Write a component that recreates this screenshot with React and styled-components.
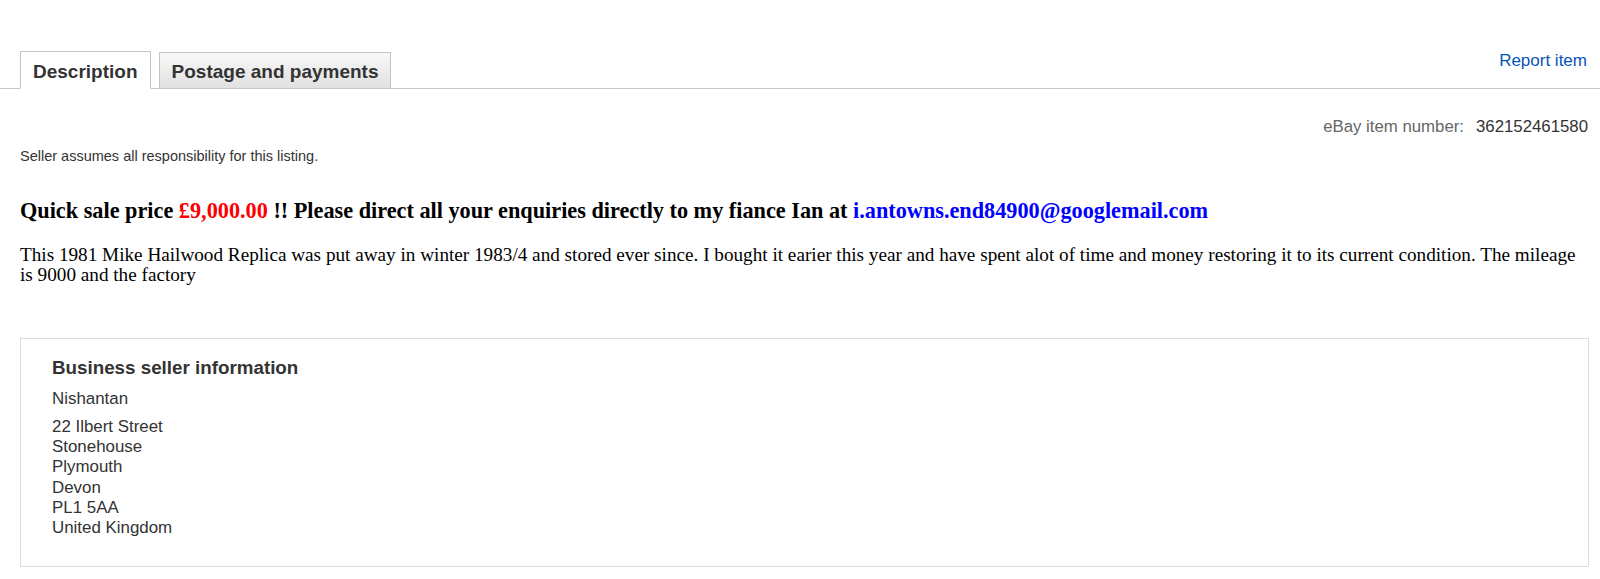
import React from "react";
import styled, { createGlobalStyle } from "styled-components";

const Global = createGlobalStyle`
  html, body { margin: 0; padding: 0; background: #fff; }
  body { font-family: "Liberation Sans", Arial, sans-serif; }
`;

const Page = styled.div`
  padding-top: 51px;
  width: 1600px;
  box-sizing: border-box;
`;

const TabBar = styled.div`
  display: flex;
  align-items: flex-end;
  height: 37px;
  border-bottom: 1px solid #c4c4c4;
  padding: 0 13px 0 20px;
`;

const Tabs = styled.div`
  display: flex;
  gap: 8px;
  align-items: flex-end;
  height: 100%;
`;

const Tab = styled.div`
  box-sizing: border-box;
  height: ${(p) => (p.$active ? "38px" : "36px")};
  margin-bottom: ${(p) => (p.$active ? "-1px" : "0")};
  padding: ${(p) => (p.$active ? "3px 12px 0" : "2px 12px 0")};
  display: flex;
  align-items: center;
  font-size: 19px;
  font-weight: bold;
  color: #333;
  border: 1px solid #c4c4c4;
  border-bottom: ${(p) => (p.$active ? "1px solid #fff" : "none")};
  background: ${(p) =>
    p.$active ? "#fff" : "linear-gradient(#f8f8f8, #e1e1e1)"};
`;

const ReportLink = styled.a`
  margin-left: auto;
  align-self: flex-start;
  font-size: 17px;
  color: #0654ba;
  text-decoration: none;
`;

const Content = styled.div`
  padding: 0 12px 0 20px;
`;

const ItemNumber = styled.div`
  text-align: right;
  margin-top: 28px;
  font-size: 16.8px;
  color: #666;
  span { color: #333; margin-left: 12px; }
`;

const Disclaimer = styled.div`
  margin-top: 11px;
  font-size: 14.5px;
  color: #333;
`;

const Headline = styled.h2`
  margin: 34px 0 0;
  font-family: "Liberation Serif", "Times New Roman", serif;
  font-size: 22.25px;
  font-weight: bold;
  color: #000;
`;

const Price = styled.span`
  color: #f00;
`;

const Email = styled.span`
  color: #00f;
`;

const Body = styled.p`
  margin: 21px 0 0;
  font-family: "Liberation Serif", "Times New Roman", serif;
  font-size: 19.2px;
  line-height: 20px;
  color: #000;
`;

const SellerBox = styled.div`
  margin: 53px 0 0;
  width: 1569px;
  box-sizing: border-box;
  border: 1px solid #dcdcdc;
  padding: 18px 31px 28px;
  color: #333;
`;

const SellerTitle = styled.div`
  font-size: 18.8px;
  font-weight: bold;
  color: #333;
`;

const SellerName = styled.div`
  margin-top: 10px;
  font-size: 16.9px;
`;

const Address = styled.div`
  margin-top: 8px;
  font-size: 16.9px;
  line-height: 20.2px;
`;

export default function App() {
  const address = [
    "22 Ilbert Street",
    "Stonehouse",
    "Plymouth",
    "Devon",
    "PL1 5AA",
    "United Kingdom",
  ];
  return (
    <Page>
      <Global />
      <TabBar>
        <Tabs>
          <Tab $active>Description</Tab>
          <Tab>Postage and payments</Tab>
        </Tabs>
        <ReportLink href="#">Report item</ReportLink>
      </TabBar>
      <Content>
        <ItemNumber>
          eBay item number:<span>362152461580</span>
        </ItemNumber>
        <Disclaimer>Seller assumes all responsibility for this listing.</Disclaimer>
        <Headline>
          Quick sale price <Price>£9,000.00</Price> !! Please direct all your
          enquiries directly to my fiance Ian at{" "}
          <Email>i.antowns.end84900@googlemail.com</Email>
        </Headline>
        <Body>
          This 1981 Mike Hailwood Replica was put away in winter 1983/4 and
          stored ever since. I bought it earier this year and have spent alot of
          time and money restoring it to its current condition. The mileage is
          9000 and the factory
        </Body>
        <SellerBox>
          <SellerTitle>Business seller information</SellerTitle>
          <SellerName>Nishantan</SellerName>
          <Address>
            {address.map((l) => (
              <div key={l}>{l}</div>
            ))}
          </Address>
        </SellerBox>
      </Content>
    </Page>
  );
}
